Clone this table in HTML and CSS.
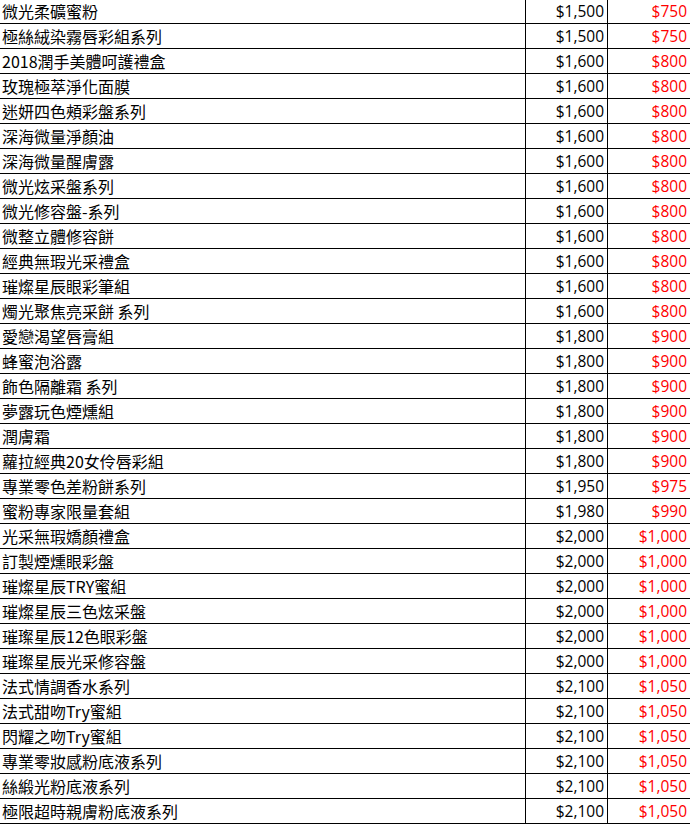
FILE: index.html
```html
<!DOCTYPE html>
<html lang="zh-Hant">
<head>
<meta charset="utf-8">
<title>價目表</title>
<link rel="stylesheet" href="styles.css">
</head>
<body>
<div class="sheet">
  <div class="row"><div class="cell name">微光柔礦蜜粉</div><div class="cell price">$1,500</div><div class="cell sale">$750</div></div>
  <div class="row"><div class="cell name">極絲絨染霧唇彩組系列</div><div class="cell price">$1,500</div><div class="cell sale">$750</div></div>
  <div class="row"><div class="cell name">2018潤手美體呵護禮盒</div><div class="cell price">$1,600</div><div class="cell sale">$800</div></div>
  <div class="row"><div class="cell name">玫瑰極萃淨化面膜</div><div class="cell price">$1,600</div><div class="cell sale">$800</div></div>
  <div class="row"><div class="cell name">迷妍四色頰彩盤系列</div><div class="cell price">$1,600</div><div class="cell sale">$800</div></div>
  <div class="row"><div class="cell name">深海微量淨顏油</div><div class="cell price">$1,600</div><div class="cell sale">$800</div></div>
  <div class="row"><div class="cell name">深海微量醒膚露</div><div class="cell price">$1,600</div><div class="cell sale">$800</div></div>
  <div class="row"><div class="cell name">微光炫采盤系列</div><div class="cell price">$1,600</div><div class="cell sale">$800</div></div>
  <div class="row"><div class="cell name">微光修容盤-系列</div><div class="cell price">$1,600</div><div class="cell sale">$800</div></div>
  <div class="row"><div class="cell name">微整立體修容餅</div><div class="cell price">$1,600</div><div class="cell sale">$800</div></div>
  <div class="row"><div class="cell name">經典無瑕光采禮盒</div><div class="cell price">$1,600</div><div class="cell sale">$800</div></div>
  <div class="row"><div class="cell name">璀燦星辰眼彩筆組</div><div class="cell price">$1,600</div><div class="cell sale">$800</div></div>
  <div class="row"><div class="cell name">燭光聚焦亮采餅 系列</div><div class="cell price">$1,600</div><div class="cell sale">$800</div></div>
  <div class="row"><div class="cell name">愛戀渴望唇膏組</div><div class="cell price">$1,800</div><div class="cell sale">$900</div></div>
  <div class="row"><div class="cell name">蜂蜜泡浴露</div><div class="cell price">$1,800</div><div class="cell sale">$900</div></div>
  <div class="row"><div class="cell name">飾色隔離霜 系列</div><div class="cell price">$1,800</div><div class="cell sale">$900</div></div>
  <div class="row"><div class="cell name">夢露玩色煙燻組</div><div class="cell price">$1,800</div><div class="cell sale">$900</div></div>
  <div class="row"><div class="cell name">潤膚霜</div><div class="cell price">$1,800</div><div class="cell sale">$900</div></div>
  <div class="row"><div class="cell name">蘿拉經典20女伶唇彩組</div><div class="cell price">$1,800</div><div class="cell sale">$900</div></div>
  <div class="row"><div class="cell name">專業零色差粉餅系列</div><div class="cell price">$1,950</div><div class="cell sale">$975</div></div>
  <div class="row"><div class="cell name">蜜粉專家限量套組</div><div class="cell price">$1,980</div><div class="cell sale">$990</div></div>
  <div class="row"><div class="cell name">光采無瑕嬌顏禮盒</div><div class="cell price">$2,000</div><div class="cell sale">$1,000</div></div>
  <div class="row"><div class="cell name">訂製煙燻眼彩盤</div><div class="cell price">$2,000</div><div class="cell sale">$1,000</div></div>
  <div class="row"><div class="cell name">璀燦星辰TRY蜜組</div><div class="cell price">$2,000</div><div class="cell sale">$1,000</div></div>
  <div class="row"><div class="cell name">璀燦星辰三色炫采盤</div><div class="cell price">$2,000</div><div class="cell sale">$1,000</div></div>
  <div class="row"><div class="cell name">璀璨星辰12色眼彩盤</div><div class="cell price">$2,000</div><div class="cell sale">$1,000</div></div>
  <div class="row"><div class="cell name">璀璨星辰光采修容盤</div><div class="cell price">$2,000</div><div class="cell sale">$1,000</div></div>
  <div class="row"><div class="cell name">法式情調香水系列</div><div class="cell price">$2,100</div><div class="cell sale">$1,050</div></div>
  <div class="row"><div class="cell name">法式甜吻Try蜜組</div><div class="cell price">$2,100</div><div class="cell sale">$1,050</div></div>
  <div class="row"><div class="cell name">閃耀之吻Try蜜組</div><div class="cell price">$2,100</div><div class="cell sale">$1,050</div></div>
  <div class="row"><div class="cell name">專業零妝感粉底液系列</div><div class="cell price">$2,100</div><div class="cell sale">$1,050</div></div>
  <div class="row"><div class="cell name">絲緞光粉底液系列</div><div class="cell price">$2,100</div><div class="cell sale">$1,050</div></div>
  <div class="row"><div class="cell name">極限超時親膚粉底液系列</div><div class="cell price">$2,100</div><div class="cell sale">$1,050</div></div>
</div>
</body>
</html>
```
FILE: styles.css
```css
html, body {
  margin: 0;
  padding: 0;
  background: #ffffff;
}

body {
  width: 690px;
  overflow: hidden;
}

.sheet {
  margin-top: -1px;
  display: flex;
  flex-direction: column;
}

.row {
  display: grid;
  grid-template-columns: 526px 82px 1fr;
  height: 25px;
  box-sizing: border-box;
  border-bottom: 1px solid #000;
}

.cell {
  box-sizing: border-box;
  height: 24px;
  line-height: 24px;
  white-space: nowrap;
  overflow: hidden;
  color: #000;
}

.name {
  padding-left: 2px;
  border-right: 1px solid #000;
  font-family: "Noto Sans CJK TC", "Noto Sans CJK SC", sans-serif;
  font-size: 16px;
}

.price, .sale {
  text-align: right;
  padding-right: 3px;
  font-family: "Open Sans", "Liberation Sans", sans-serif;
  font-size: 15.5px;
}

.price {
  border-right: 1px solid #000;
}

.sale {
  color: #ff0000;
}
```
